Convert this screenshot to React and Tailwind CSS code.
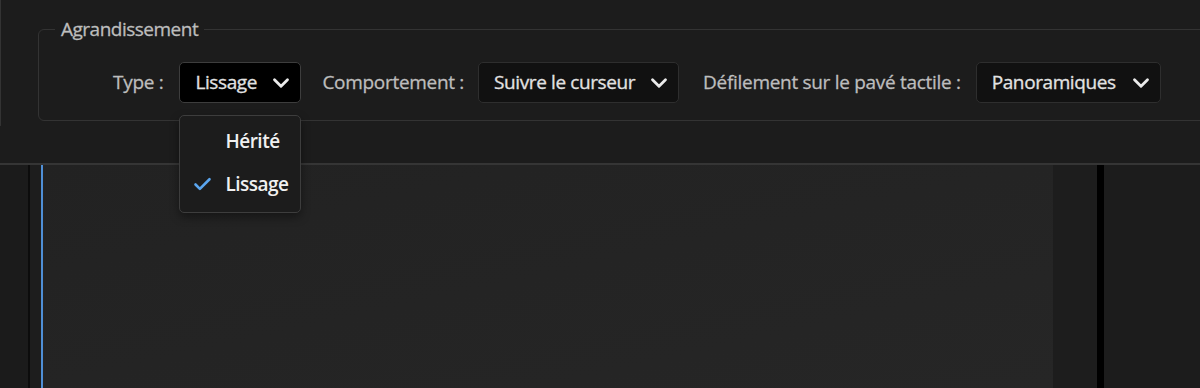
import React from 'react'
import { ChevronDown, Check } from 'lucide-react'

const font = { fontFamily: '"Open Sans", "Noto Sans", sans-serif' }

const Select = ({ value, width, active, children }) => (
    <div className={`relative ${width}`}>
        <div className={`h-[41px] flex items-center justify-between pl-[15px] pr-[6px] rounded-[5px] border ${active ? 'bg-black border-[#3d3d3d]' : 'bg-[#111111] border-[#2e2e2e]'}`}>
            <span className="text-[19px] text-[#e2e2e2] tracking-[-0.4px] [-webkit-text-stroke:0.3px_#e2e2e2]">{value}</span>
            <ChevronDown size={26} strokeWidth={2.6} className="text-[#ebebeb]" />
        </div>
        {children}
    </div>
)

export default function App() {
    return (
        <div className="w-[1200px] h-[388px] bg-[#1e1e1e] flex flex-col overflow-hidden" style={font}>
            {/* Top settings panel */}
            <div className="h-[165px] shrink-0 bg-[#1c1c1c] border-b-2 border-[#353535] flex items-start">
                <div className="w-[4px] h-[126px] border-r border-b border-[#333333] rounded-br-[5px]"></div>

                <fieldset className="ml-[37px] mt-[18px] w-[1190px] shrink-0 h-[103px] border border-[#333333] rounded-[6px] pl-[16px]">
                    <legend className="px-[6px] text-[19px] text-[#bdbdbd] tracking-[-0.5px] leading-[22px] [-webkit-text-stroke:0.3px_#bdbdbd]">Agrandissement</legend>

                    <div className="flex items-center ml-[58px] mt-[22px]">
                        <span className="text-[19px] text-[#bdbdbd] tracking-[-0.3px] [-webkit-text-stroke:0.3px_#bdbdbd]">Type :</span>

                        <div className="ml-[16px]">
                            <Select value="Lissage" width="w-[122px]" active>
                                {/* Open menu */}
                                <div className="absolute left-0 top-[53px] w-[122px] h-[98px] bg-[#1c1c1c] border border-[#3d3d3d] rounded-[5px] z-10 pt-[4px] shadow-[0_4px_10px_rgba(0,0,0,0.4)]">
                                    <div className="h-[43px] flex items-center pl-[45px]">
                                        <span className="text-[19px] font-semibold text-[#f0f0f0] tracking-[-0.5px]">Hérité</span>
                                    </div>
                                    <div className="h-[43px] flex items-center pl-[12px]">
                                        <Check size={21} strokeWidth={3} className="text-[#5aa5ee]" />
                                        <span className="ml-[12px] text-[19px] font-semibold text-[#f0f0f0] tracking-[-0.5px]">Lissage</span>
                                    </div>
                                </div>
                            </Select>
                        </div>

                        <span className="ml-[21px] text-[19px] text-[#bdbdbd] tracking-[-0.3px] [-webkit-text-stroke:0.3px_#bdbdbd]">Comportement :</span>
                        <div className="ml-[14px]">
                            <Select value="Suivre le curseur" width="w-[201px]" />
                        </div>

                        <span className="ml-[24px] text-[19px] text-[#bdbdbd] tracking-[-0.3px] [-webkit-text-stroke:0.3px_#bdbdbd]">Défilement sur le pavé tactile :</span>
                        <div className="ml-[15px]">
                            <Select value="Panoramiques" width="w-[185px]" />
                        </div>
                    </div>
                </fieldset>
            </div>

            {/* Workspace below */}
            <div className="flex-1 flex">
                <div className="w-[28px] bg-[#1b1b1b]"></div>
                <div className="w-[2px] bg-[#0c0c0c]"></div>
                <div className="w-[11px] bg-[#1d1d1d]"></div>
                <div className="w-[2px] bg-[#4f8fd6]"></div>
                <div className="w-[1010px] bg-gradient-to-br from-[#222222] to-[#262626]"></div>
                <div className="w-[44px] bg-[#1d1d1d]"></div>
                <div className="w-[7px] bg-black"></div>
                <div className="flex-1 bg-[#1c1c1c]"></div>
            </div>
        </div>
    )
}
